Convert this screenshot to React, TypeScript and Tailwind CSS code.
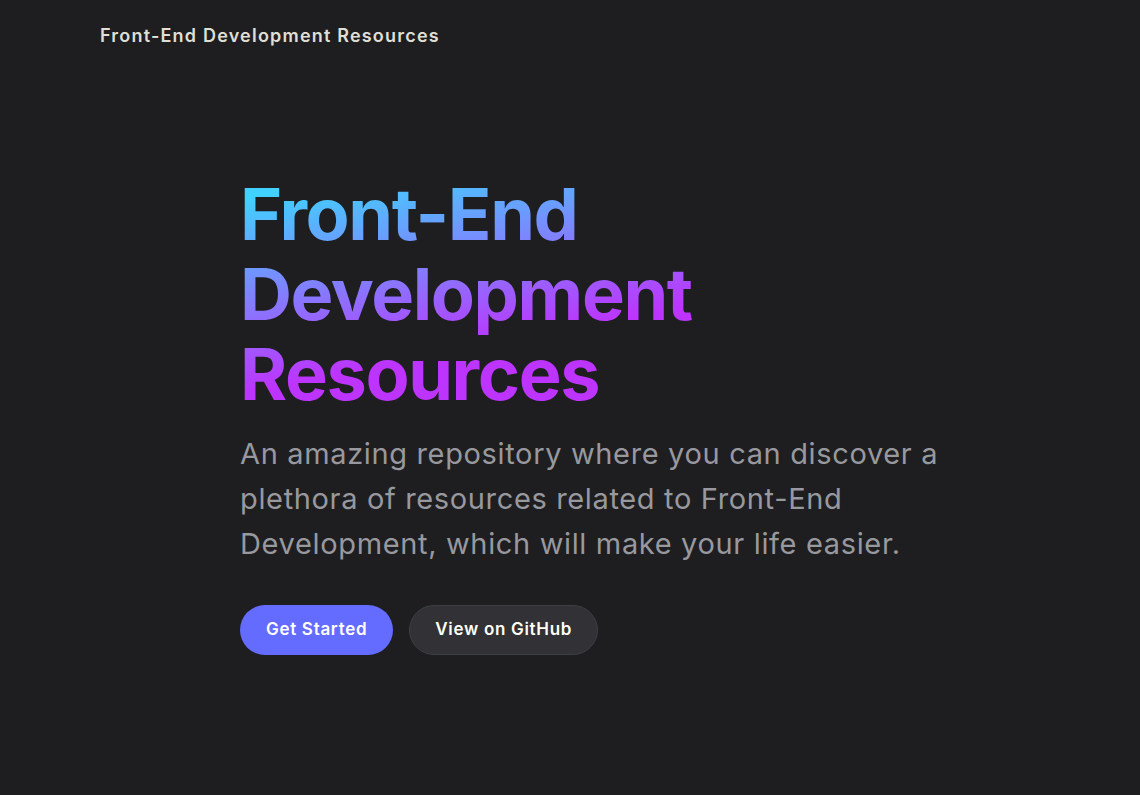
const App = (): JSX.Element => (
  <div
    className="min-h-screen bg-[#1e1e20] text-[#dfdfd6]"
    style={{ fontFamily: "Inter, 'Noto Sans', sans-serif" }}
  >
    <header className="flex h-[70px] items-center px-[100px]">
      <span className="text-[18px] font-semibold tracking-[1.2px] text-[#dfdfd6]">
        Front-End Development Resources
      </span>
    </header>

    <main className="pl-[240px] pt-[104px]">
      <h1 className="w-fit bg-[linear-gradient(169deg,#41d1ff_8%,#bd34fe_67%)] bg-clip-text text-[72px] font-bold leading-[80px] tracking-[-1.4px] text-transparent">
        Front-End
        <br />
        Development
        <br />
        Resources
      </h1>
      <p className="mt-[17px] max-w-[720px] text-[29px] font-normal leading-[45px] tracking-[0.65px] text-[#98989f]">
        An amazing repository where you can discover a plethora of resources
        related to Front-End Development, which will make your life easier.
      </p>
      <div className="mt-[39px] flex gap-4">
        <a className="flex h-[50px] items-center rounded-full bg-[#646cff] px-[26px] text-[17px] font-semibold tracking-[0.7px] text-white">
          Get Started
        </a>
        <a className="flex h-[50px] items-center rounded-full border border-[#3c3f44] bg-[#313136] px-[25px] text-[17px] font-semibold tracking-[0.7px] text-[#fffff5]">
          View on GitHub
        </a>
      </div>
    </main>
  </div>
);

export default App;
